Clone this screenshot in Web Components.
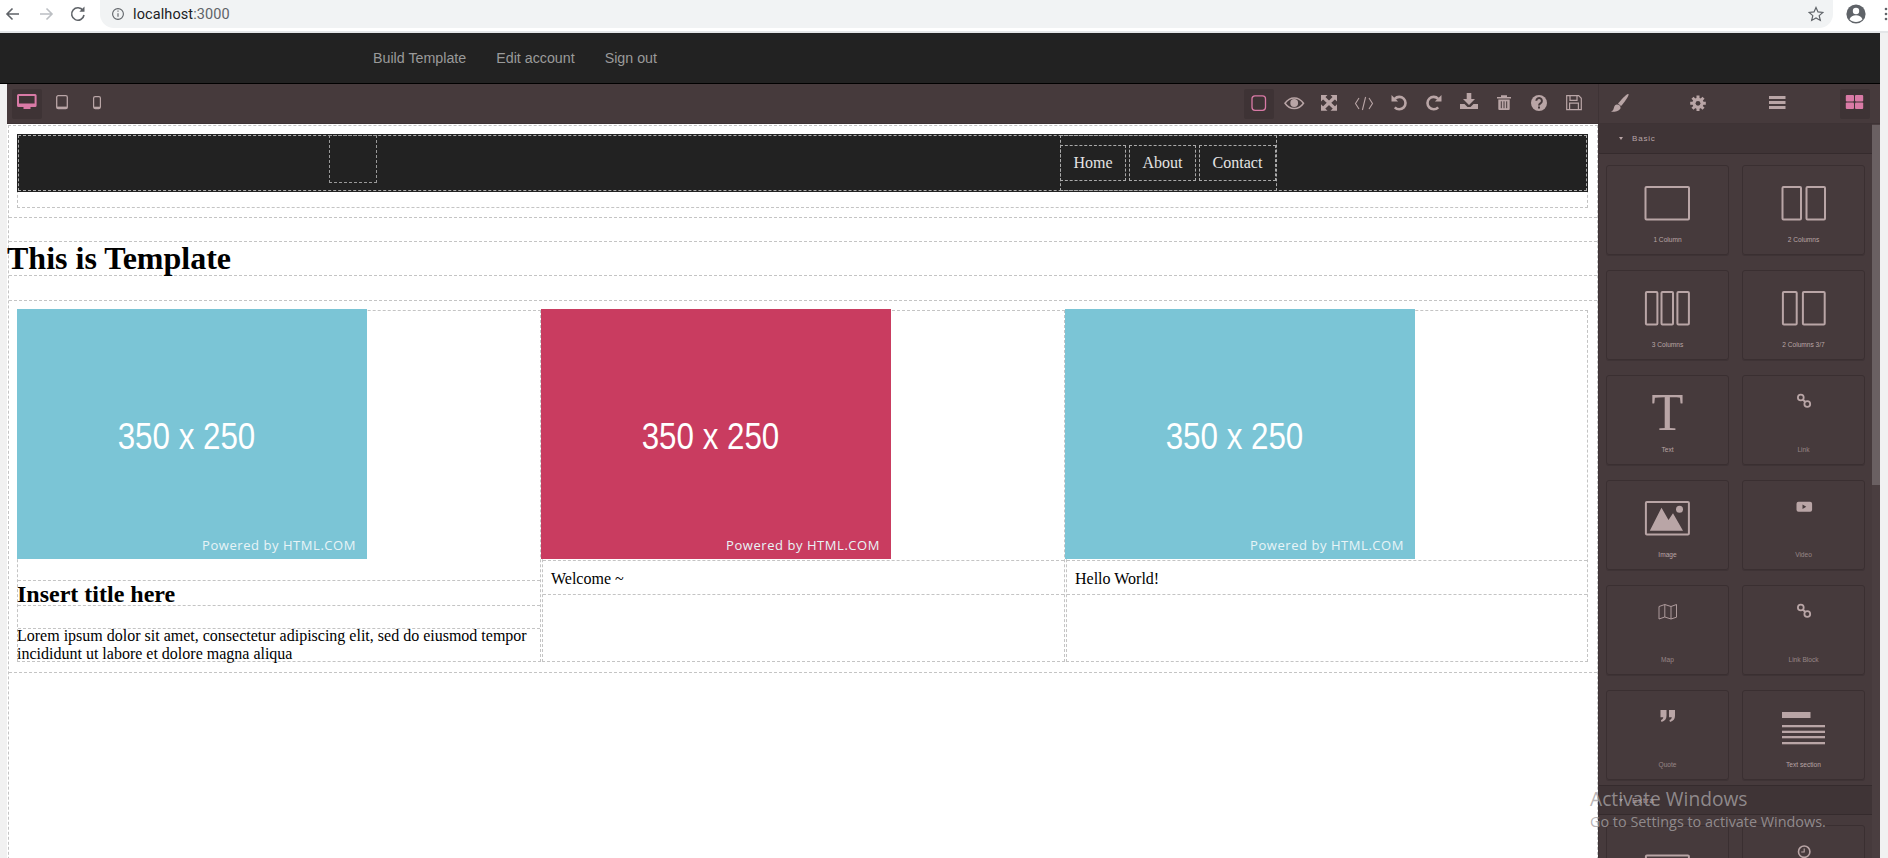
<!DOCTYPE html>
<html>
<head>
<meta charset="utf-8">
<title>localhost:3000</title>
<style>
  html, body { margin: 0; padding: 0; height: 100%; overflow: hidden; background: #f1f1f1; }
</style>
</head>
<body>
<app-shell></app-shell>
<script>
function mount(el, html) {
  const template = document.createElement('template');
  template.innerHTML = html;
  el.attachShadow({ mode: 'open' });
  el.shadowRoot.appendChild(template.content.cloneNode(true));
}

class BrowserBar extends HTMLElement {
  constructor() {
    super();
    mount(this, `
      <style>
        :host { display: flex; align-items: flex-start; height: 33px; box-sizing: border-box; background: #fff; border-bottom: 2px solid #e4e6e8; font-family: Roboto, "Liberation Sans", sans-serif; }
        .nav { display: flex; width: 100px; height: 28px; align-items: center; }
        svg { display: block; }
        .box { width: 1733px; height: 28px; background: #f1f3f4; border-radius: 0 0 14px 14px / 0 0 14px 14px; border-top-left-radius: 0; display: flex; align-items: center; font-size: 14.5px; color: #202124; letter-spacing: .1px; }
        .box span { color: #5f6368; }
        .star { margin-left: auto; margin-right: 9px; }
        .url { margin-left: 9px; }
        .right { display: flex; align-items: center; height: 28px; }
      </style>
      <div class="nav">
        <svg width="100" height="28" fill="none" stroke-width="1.6">
          <path d="M19 14H7M12.5 8.5 7 14l5.500 5.500" stroke="#5f6368"/>
          <path d="M40 14h12M46.500 8.500 52 14l-5.500 5.500" stroke="#bcbfc3"/>
          <path d="M83 10.500A6.200 6.200 0 1 0 84 15" stroke="#5f6368"/>
          <path d="M84.500 6.500v5.200h-5.200z" fill="#5f6368"/>
        </svg>
      </div>
      <div class="box">
        <svg width="12" height="28" style="margin-left:12px" fill="none" stroke="#5f6368" stroke-width="1.1">
          <circle cx="6" cy="14" r="5.400"/><path d="M6 13.200v3.600M6 10.600v1.200"/>
        </svg>
        <div class="url">localhost<span>:3000</span></div>
        <svg class="star" width="16" height="28" viewBox="0 0 16 28" fill="none" stroke="#5f6368" stroke-width="1.2">
          <path d="m8 7.400 2 4.500 4.900.5-3.700 3.200 1.100 4.800L8 17.900l-4.300 2.500 1.100-4.800-3.700-3.200 4.900-.5z"/>
        </svg>
      </div>
      <div class="right">
        <svg width="55" height="28" fill="#5f6368">
          <circle cx="23" cy="14" r="9.600"/>
          <circle cx="23" cy="11" r="3.200" fill="#fff"/>
          <path d="M16.500 19.200c1-2.800 3.600-4 6.500-4s5.500 1.200 6.500 4c-1.700 1.800-3.900 2.800-6.500 2.800s-4.800-1-6.500-2.800z" fill="#fff"/>
          <circle cx="53" cy="9" r="1.300"/><circle cx="53" cy="14" r="1.300"/><circle cx="53" cy="19" r="1.300"/>
        </svg>
      </div>
    `);
  }
}

class SiteNav extends HTMLElement {
  constructor() {
    super();
    mount(this, `
      <style>
        :host { display: flex; align-items: center; height: 51px; box-sizing: border-box; margin-right: 8px; padding: 0 0 0 358px; background: #222; border-bottom: 1px solid #000; font: 14.25px "Liberation Sans", sans-serif; color: #9a9a9a; }
        a { padding: 0 15px; }
      </style>
      <a>Build Template</a><a>Edit account</a><a>Sign out</a>
    `);
  }
}

class ToolButton extends HTMLElement {
  constructor() {
    super();
    mount(this, `
      <style>
        :host { display: block; width: 30px; height: 30px; border-radius: 2px; color: #b9a5a6; }
        :host([active]) { background: #3e3335; color: #d97aa6; }
      </style>
      <slot></slot>
    `);
  }
}

const ICONS = {
  desktop: '<path fill-rule="evenodd" d="M6.500 5h16.600a1.500 1.500 0 0 1 1.500 1.500v10a1.500 1.500 0 0 1-1.500 1.500h-4.600v2h-7v-2H6.500A1.500 1.500 0 0 1 5 16.500v-10A1.500 1.500 0 0 1 6.500 5zM7 7v7.500h15.600V7z"/>',
  tablet: '<rect x="9.700" y="6.700" width="10.600" height="13" rx="1.500" fill="none" stroke="currentColor" stroke-width="1.300"/><rect x="10" y="17.600" width="10" height="2" />',
  mobile: '<rect x="11.600" y="7.600" width="6.800" height="12" rx="1.500" fill="none" stroke="currentColor" stroke-width="1.200"/><rect x="12" y="17.700" width="6" height="1.800"/>',
  square: '<rect x="8" y="6.800" width="13.500" height="14.500" rx="3" fill="none" stroke="currentColor" stroke-width="1.300"/>',
  eye: '<path d="M6 14.200C9 9.900 12 8.900 15.200 8.900s6.300 1 9.300 5.300c-3 4.300-6.100 5.300-9.300 5.300S9 18.500 6 14.200z" fill="none" stroke="currentColor" stroke-width="1.500"/><circle cx="15.200" cy="14" r="3.900"/>',
  arrows: '<path d="M7 6h6.500L7 12.500zM23 6h-6.500L23 12.500zM7 21.700h6.500L7 15.200zM23 21.700h-6.500l6.500-6.500z"/><path d="m9.500 8.500 11 10.700M20.500 8.500l-11 10.700" stroke="currentColor" stroke-width="3.200"/>',
  code: '<path d="M10 9 6.500 14.500 10 20M20 9l3.500 5.500L20 20M16.600 8l-3.200 13" fill="none" stroke="currentColor" stroke-width="1.100"/>',
  undo: '<path d="M10.800 9.800a6.200 6.200 0 1 1 0 8.500" fill="none" stroke="currentColor" stroke-width="2.600"/><path d="M7.500 6v6.600h6.600z"/>',
  redo: '<g transform="translate(30 0) scale(-1 1)"><path d="M10.800 9.800a6.200 6.200 0 1 1 0 8.500" fill="none" stroke="currentColor" stroke-width="2.600"/><path d="M7.500 6v6.600h6.600z"/></g>',
  download: '<path d="M12.700 4h4.600v6H21l-6 6-6-6h3.700zM6 15h4.500l3 3h3l3-3H24v5H6z"/>',
  trash: '<path d="M8 8h4V6.300h6V8h4v1.600H8zM9.300 10.500h11.400V20a1 1 0 0 1-1 1h-9.400a1 1 0 0 1-1-1z"/><path d="M12.300 12.300v6.900M15 12.300v6.900M17.700 12.300v6.900" stroke="#463a3c" stroke-width="1"/>',
  help: '<circle cx="15" cy="14" r="8"/><path d="M12.300 11.700a2.800 2.800 0 1 1 4.400 2.500c-1.100.7-1.700 1.100-1.700 2.300" fill="none" stroke="#463a3c" stroke-width="2"/><rect x="14" y="17.500" width="2" height="2" fill="#463a3c"/>',
  save: '<path d="M7.700 6.700h12l2.600 2.600v11.300H7.700z M11 6.900v4.400h7V6.900M10.600 20.400v-6.300h8.800v6.300" fill="none" stroke="currentColor" stroke-width="1.200"/>',
  brush: '<path d="M23.500 5c1 1-4.500 9-7.500 12l-3-2.500C16 11 22 4 23.500 5z"/><path d="M12 15.500c2.500 0 4 2 3.500 3.700C14.800 21.500 10 23.500 6 22.500c2.500-1 2.500-2.500 3-4 .4-1.700 1.500-3 3-3z"/>',
  cog: '<g stroke="currentColor" stroke-width="3"><path d="M15 6.500v15.600M7.200 14.300h15.600M9.500 8.800l11 11M20.500 8.800l-11 11"/></g><circle cx="15" cy="14.300" r="5.600"/><circle cx="15" cy="14.300" r="2.400" fill="#463a3c"/>',
  bars: '<path d="M7 7h16.500v2.900H7zM7 12.100h16.500V15H7zM7 17.100h16.500V20H7z"/>',
  grid: '<rect x="5.800" y="6" width="8.200" height="6.500" rx="1"/><rect x="15" y="6" width="8.200" height="6.500" rx="1"/><rect x="5.800" y="13.500" width="8.200" height="6.500" rx="1"/><rect x="15" y="13.500" width="8.200" height="6.500" rx="1"/>'
};

function toolButtons(list) {
  return list.map((item) => {
    const [name, active] = item.split(':');
    return `<tool-button ${active ? 'active' : ''}><svg width="30" height="30" viewBox="0 0 30 30" fill="currentColor" style="display:block">${ICONS[name]}</svg></tool-button>`;
  }).join('');
}

class EditorToolbar extends HTMLElement {
  constructor() {
    super();
    mount(this, `
      <style>
        :host { display: flex; align-items: center; justify-content: space-between; height: 40px; box-sizing: border-box; padding: 0 9px 0 5px; background: #463a3c; border-bottom: 1px solid #3e3335; }
        div { display: flex; gap: 5px; }
      </style>
      <div>${toolButtons(['desktop:1', 'tablet', 'mobile'])}</div>
      <div>${toolButtons(['square:1', 'eye', 'arrows', 'code', 'undo', 'redo', 'download', 'trash', 'help', 'save'])}</div>
    `);
  }
}

class PanelSwitcher extends HTMLElement {
  constructor() {
    super();
    mount(this, `
      <style>
        :host { display: flex; align-items: center; justify-content: space-between; height: 40px; box-sizing: border-box; padding: 0 10px 0 6px; background: #463a3c; border-bottom: 1px solid #3e3335; border-left: 1px solid #3e3335; }
      </style>
      ${toolButtons(['brush', 'cog', 'bars', 'grid:1'])}
    `);
  }
}

class PlaceholderImage extends HTMLElement {
  constructor() {
    super();
    mount(this, `
      <style>
        :host { display: flex; flex-direction: column; width: 350px; height: 250px; flex: none; background: var(--tone, #7bc5d6); color: #fff; font-family: "Liberation Sans", sans-serif; }
        .size { margin: 107px 11px 0 0; text-align: center; font-size: 36px; line-height: 42px; transform: scaleX(.87); }
        .by { margin: auto 11px 5px 0; text-align: right; font: 13px/18px "Open Sans", sans-serif; letter-spacing: .55px; color: #e8f4f7; }
      </style>
      <div class="size">350 x 250</div>
      <div class="by">Powered by HTML.COM</div>
    `);
  }
}

class TemplateNav extends HTMLElement {
  constructor() {
    super();
    mount(this, `
      <style>
        :host { display: block; box-sizing: border-box; height: 74px; border: 1px dashed #c4c4c4; border-top: 0; margin: 0; font: 16px "Liberation Serif", serif; }
        .bar { margin: 0 -1px; height: 58px; box-sizing: border-box; padding: 1px; background: #222; }
        .in { display: flex; height: 56px; box-sizing: border-box; border: 1px dashed #aaa; }
        .logo { box-sizing: border-box; width: 48px; height: 48px; margin: -1px 0 0 310px; border: 1px dashed #999; }
        .group { display: flex; align-items: center; gap: 3px; box-sizing: border-box; width: 217px; height: 56px; margin: -1px 0 0 683px; border: 1px dashed #aaa; }
        .group a { box-sizing: border-box; height: 36px; line-height: 34px; text-align: center; color: #e4e4e4; border: 1px dashed #aaa; }
      </style>
      <div class="bar">
        <div class="in">
          <div class="logo"></div>
          <div class="group">
            <a style="width:66px;margin-left:-1px">Home</a><a style="width:67px">About</a><a style="width:77px">Contact</a>
          </div>
        </div>
      </div>
    `);
  }
}

class ColumnCell extends HTMLElement {
  constructor() {
    super();
    mount(this, `
      <style>
        :host { display: block; box-sizing: border-box; height: 352px; border: 1px dashed #c4c4c4; }
        :host([shift]) { margin-left: 1px; }
        ::slotted(placeholder-image) { margin: -2px 0 0 -1px; }
        :host([shift]) ::slotted(placeholder-image) { margin-left: -2px; }
      </style>
      <slot></slot>
    `);
  }
}

class TemplateCanvas extends HTMLElement {
  constructor() {
    super();
    mount(this, `
      <style>
        :host { display: block; flex: 1; min-height: 0; overflow: hidden; background: #fff; color: #000; font: 16px/18px "Liberation Serif", serif; }
        .page { box-sizing: border-box; margin: 1px 0 0 1px; height: 800px; border: 1px dashed #c4c4c4; border-bottom: 0; }
        .head { box-sizing: border-box; height: 92px; padding: 8px 9px 9px 8px; border-bottom: 1px dashed #c4c4c4; }
        h1 { box-sizing: border-box; height: 35px; margin: 23px 0 0; font-size: 32px; line-height: 33px; font-weight: bold; text-indent: -2px; border-top: 1px dashed #c4c4c4; border-bottom: 1px dashed #c4c4c4; }
        .sec { box-sizing: border-box; height: 373px; margin-top: 24px; padding: 9px 9px 10px 8px; border-top: 1px dashed #c4c4c4; border-bottom: 1px dashed #c4c4c4; }
        .row { display: grid; grid-template-columns: 524px 524px 523px; }
        h2 { box-sizing: border-box; height: 26px; margin: 21px 0 0; font-size: 24px; line-height: 26px; font-weight: bold; text-indent: -1px; border-top: 1px dashed #c4c4c4; border-bottom: 1px dashed #c4c4c4; }
        .p { margin-top: 22px; height: 33px; border-top: 1px dashed #c4c4c4; }
        .p div { margin: -2px 0 0 -1px; }
        .txt { box-sizing: border-box; height: 35px; margin-top: 1px; padding: 9px 8px; line-height: 18px; border-top: 1px dashed #c4c4c4; border-bottom: 1px dashed #c4c4c4; }
      </style>
      <div class="page">
        <div class="head"><template-nav></template-nav></div>
        <h1>This is Template</h1>
        <div class="sec">
          <div class="row">
            <column-cell>
              <placeholder-image></placeholder-image>
              <h2>Insert title here</h2>
              <div class="p"><div>Lorem ipsum dolor sit amet, consectetur adipiscing elit, sed do eiusmod tempor incididunt ut labore et dolore magna aliqua</div></div>
            </column-cell>
            <column-cell shift>
              <placeholder-image style="--tone:#c93c60"></placeholder-image>
              <div class="txt">Welcome ~</div>
            </column-cell>
            <column-cell shift>
              <placeholder-image></placeholder-image>
              <div class="txt">Hello World!</div>
            </column-cell>
          </div>
        </div>
      </div>
    `);
  }
}

class BlockTile extends HTMLElement {
  constructor() {
    super();
    mount(this, `
      <style>
        :host { display: flex; flex-direction: column; align-items: center; box-sizing: border-box; width: 123px; height: 90px; padding-top: 16px; border: 1px solid #3a2f31; border-radius: 3px; box-shadow: 0 1px 0 #3e3335; color: #b9a5a6; }
        ::slotted(*) { display: block; width: 48px; height: 48px; flex: none; }
        .label { margin-top: 5px; height: 10px; font: 6.6px/10px "Liberation Sans", sans-serif; white-space: nowrap; }
        :host([dim]) .label { opacity: .7; }
      </style>
      <slot></slot>
      <div class="label"></div>
    `);
    this.shadowRoot.querySelector('.label').textContent = this.getAttribute('label');
  }
}

function tile(label, body, dim) {
  return `<block-tile label="${label}" ${dim ? 'dim' : ''}><svg viewBox="0 0 48 48" fill="currentColor">${body}</svg></block-tile>`;
}

function outline(rects) {
  return '<g fill="none" stroke="currentColor" stroke-width="2">' + rects.map((r) => `<rect x="${r[0]}" y="${r[1]}" width="${r[2]}" height="${r[3]}" rx="1"/>`).join('') + '</g>';
}

const chain = '<g fill="none" stroke="currentColor" stroke-width="1.800"><circle cx="20.800" cy="5.500" r="2.900"/><circle cx="27.300" cy="12" r="2.900"/><path d="m22.700 7.500 2.600 2.500"/></g>';

class BlockPanel extends HTMLElement {
  constructor() {
    super();
    mount(this, `
      <style>
        :host { display: flex; flex: 1; min-height: 0; overflow: hidden; background: #463a3c; border-left: 1px solid #3e3335; color: #b9a5a6; }
        .list { width: 273px; flex: none; }
        .cat { display: flex; align-items: center; box-sizing: border-box; height: 30px; background: #3f3436; border-bottom: 1px solid #352b2d; font: 8px "Liberation Sans", sans-serif; letter-spacing: .8px; }
        .cat.next { margin-top: 5px; border-top: 1px solid #352b2d; }
        .cat svg { margin: 0 9px 0 20px; }
        .grid { display: grid; grid-template-columns: 123px 123px; gap: 15px 13px; padding: 11px 7px 0; }
        .cat.next + .grid { padding-top: 10px; }
        .bar { width: 8px; flex: none; background: #4a3e40; }
        .thumb { height: 360px; margin-top: 1px; background: #6a6062; }
        .big { font: 52px/42px "Liberation Serif", serif; text-align: center; color: #b9a5a6; -webkit-text-stroke: .2px #b9a5a6; }
      </style>
      <div class="list">
        <div class="cat"><svg width="4" height="3" fill="currentColor"><path d="M0 0h4L2 3z"/></svg>Basic</div>
        <div class="grid">
          ${tile('1 Column', outline([[1.500, 5, 43.500, 32.500]]))}
          ${tile('2 Columns', outline([[2.500, 5, 18.500, 32.500], [26.500, 5, 18.500, 32.500]]))}
          ${tile('3 Columns', outline([[1.900, 5, 11.500, 32.500], [17.500, 5, 11.500, 32.500], [33.400, 5, 11.500, 32.500]]))}
          ${tile('2 Columns 3/7', outline([[2.900, 5, 13.800, 32.500], [22.900, 5, 21.800, 32.500]]))}
          <block-tile label="Text"><div class="big">T</div></block-tile>
          ${tile('Link', chain, 1)}
          ${tile('Image', '<rect x="1.900" y="5" width="43" height="32.500" rx="1" fill="none" stroke="currentColor" stroke-width="2"/><circle cx="35.500" cy="12.300" r="3.500"/><path d="M5.800 33.700 17.500 10.700l7 12.300 4.500-6.700 10 17.400z"/>')}
          ${tile('Video', '<path fill-rule="evenodd" d="M18.500 4.700h11.600a2 2 0 0 1 2 2v6a2 2 0 0 1-2 2H18.500a2 2 0 0 1-2-2v-6a2 2 0 0 1 2-2zM22.500 7.500v4.400l3.800-2.200z"/>', 1)}
          ${tile('Map', '<path d="M15 4.500 20.800 2.500 27 4.500l5.500-2V15.200L27 17l-6.200-2-5.800 2zM20.800 2.500V15M27 4.500V17" fill="none" stroke="currentColor" stroke-width=".9"/>', 1)}
          ${tile('Link Block', chain, 1)}
          ${tile('Quote', '<path d="M16.500 3h6v5.800c0 3.300-1.600 5.400-5 6.200l-.6-1.900c1.400-.5 2.300-1.400 2.400-2.900h-2.800zM25 3h6v5.800c0 3.300-1.600 5.400-5 6.200l-.6-1.900c1.400-.5 2.300-1.400 2.400-2.900H25z"/>', 1)}
          ${tile('Text section', '<rect x="2" y="5" width="28.500" height="6"/><rect x="2" y="18" width="43" height="2.300"/><rect x="2" y="23.700" width="43" height="2.300"/><rect x="2" y="29" width="43" height="2.300"/><rect x="2" y="35" width="43" height="2.300"/>')}
        </div>
        <div class="cat next"><svg width="4" height="3" fill="currentColor"><path d="M0 0h4L2 3z"/></svg>Extra</div>
        <div class="grid">
          ${tile('', '<rect x="1.900" y="13.500" width="43" height="20" rx="1" fill="none" stroke="currentColor" stroke-width="2"/>')}
          ${tile('', '<circle cx="24.200" cy="9.700" r="5.700" fill="none" stroke="currentColor" stroke-width="1.600"/><path d="M24.200 6.500v3.500h-3" fill="none" stroke="currentColor" stroke-width="1.100"/>')}
        </div>
      </div>
      <div class="bar"><div class="thumb"></div></div>
    `);
  }
}

class WinWatermark extends HTMLElement {
  constructor() {
    super();
    mount(this, `
      <style>
        :host { position: absolute; left: 1590px; top: 786px; color: rgba(165, 160, 162, .8); font-family: "Open Sans", sans-serif; pointer-events: none; white-space: nowrap; }
        .a { font-size: 19.2px; line-height: 26px; }
        .b { font-size: 14.4px; line-height: 20px; }
      </style>
      <div class="a">Activate Windows</div>
      <div class="b">Go to Settings to activate Windows.</div>
    `);
  }
}

class AppShell extends HTMLElement {
  constructor() {
    super();
    mount(this, `
      <style>
        :host { display: flex; flex-direction: column; position: relative; width: 1888px; height: 858px; overflow: hidden; background: #f1f1f1; }
        .editor { display: flex; flex: 1; min-height: 0; margin: 0 8px 0 7px; }
        .left { display: flex; flex-direction: column; width: 1591px; flex: none; }
        .right { display: flex; flex-direction: column; width: 282px; flex: none; }
      </style>
      <browser-bar></browser-bar>
      <site-nav></site-nav>
      <div class="editor">
        <div class="left">
          <editor-toolbar></editor-toolbar>
          <template-canvas></template-canvas>
        </div>
        <div class="right">
          <panel-switcher></panel-switcher>
          <block-panel></block-panel>
        </div>
      </div>
      <win-watermark></win-watermark>
    `);
  }
}

customElements.define('browser-bar', BrowserBar);
customElements.define('site-nav', SiteNav);
customElements.define('tool-button', ToolButton);
customElements.define('editor-toolbar', EditorToolbar);
customElements.define('panel-switcher', PanelSwitcher);
customElements.define('placeholder-image', PlaceholderImage);
customElements.define('template-nav', TemplateNav);
customElements.define('column-cell', ColumnCell);
customElements.define('template-canvas', TemplateCanvas);
customElements.define('block-tile', BlockTile);
customElements.define('block-panel', BlockPanel);
customElements.define('win-watermark', WinWatermark);
customElements.define('app-shell', AppShell);
</script>
</body>
</html>
